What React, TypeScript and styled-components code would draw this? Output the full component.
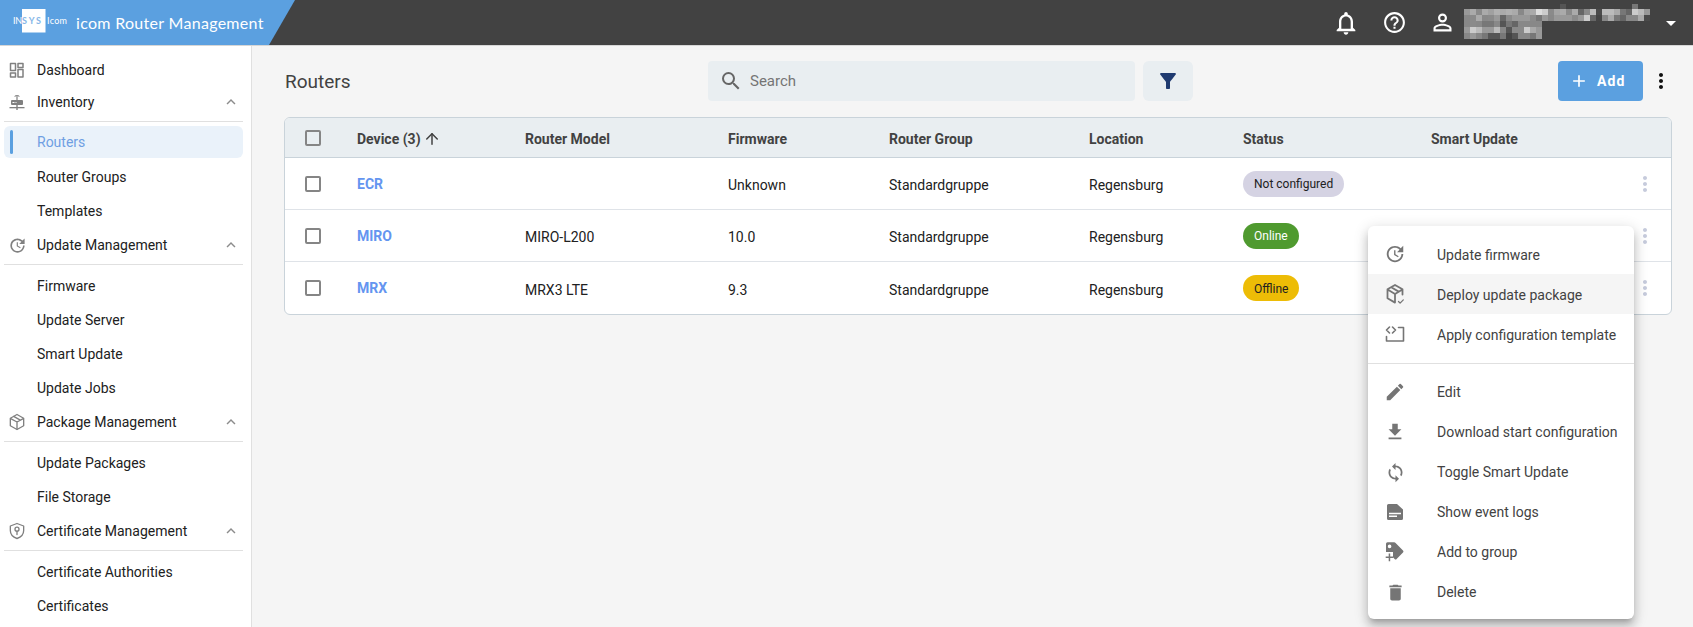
import React from "react";
import styled, { createGlobalStyle } from "styled-components";
import {
  MdAdd, MdArrowDropDown, MdDelete, MdEdit, MdExpandLess, MdFileDownload,
  MdFilterAlt, MdHelpOutline, MdMoreVert, MdNotificationsNone, MdPersonOutline, MdSearch, MdSync, MdUpdate,
} from "react-icons/md";
import { ArrowUp } from "lucide-react";

const Global = createGlobalStyle`
  html, body { margin: 0; padding: 0; height: 100%; overflow: hidden; background: #f5f5f5; }
  body { font-family: Roboto, "Liberation Sans", sans-serif; font-size: 14px; color: #212121; }
  * { box-sizing: border-box; }
`;

const Page = styled.div`display:flex;flex-direction:column;height:627px;position:relative;overflow:hidden;`;
const TopBar = styled.header`display:flex;align-items:stretch;height:46px;flex:none;background:#424242;border-bottom:1px solid #d6d6d6;color:#fff;`;
const Brand = styled.div`width:295px;display:flex;align-items:center;gap:8px;padding-left:10px;background:#5ba0e0;clip-path:polygon(0 0,100% 0,269px 100%,0 100%);`;
const BrandTitle = styled.span`font-family:Lato,"Open Sans",sans-serif;font-size:16px;letter-spacing:.3px;color:#fff;white-space:nowrap;`;
const TopActions = styled.div`margin-left:auto;display:flex;align-items:center;padding-right:10px;`;
const TopIcon = styled.span`width:48px;display:flex;justify-content:center;align-items:center;`;
const Mosaic = styled.svg`margin:4px 9px 0 -2px;align-self:flex-start;display:block;`;
const Caret = styled.span`display:flex;width:24px;`;

const Body = styled.div`display:flex;flex:1;min-height:0;`;
const Sidebar = styled.nav`width:252px;flex:none;background:#fff;border-right:1px solid #e0e0e0;padding:8px 8px 0 4px;overflow:hidden;`;
const NavHead = styled.div`height:32px;display:flex;align-items:center;padding-left:1px;color:#212121;`;
const NavIcon = styled.span`width:24px;height:24px;margin-right:8px;display:flex;align-items:center;justify-content:center;color:#808080;`;
const Chevron = styled.span`margin-left:auto;margin-right:3px;display:flex;color:#8c8c8c;`;
const NavRule = styled.div`height:1px;background:#e0e0e0;margin:3px 0 4px;`;
const SubItem = styled.div<{ $active?: boolean }>`
  height:${p => (p.$active ? "32px" : "34px")};
  margin-bottom:${p => (p.$active ? "2px" : "0")};
  display:flex;align-items:center;padding-left:33px;position:relative;border-radius:6px;
  color:${p => (p.$active ? "#6f9fe3" : "#212121")};
  background:${p => (p.$active ? "#eaf2fa" : "transparent")};
  ${p => p.$active ? `&::before{content:"";position:absolute;left:6px;top:4px;bottom:4px;width:3px;border-radius:2px;background:#5ba0e0;}` : ""}
`;
const SubList = styled.div`margin-bottom:1px;`;

const Main = styled.main`flex:1;min-width:0;padding:15px 21px 0 32px;`;
const Toolbar = styled.div`display:flex;align-items:center;height:40px;margin-bottom:16px;`;
const Title = styled.h1`width:424px;margin:0;font-size:19px;font-weight:400;color:#424242;padding-left:1px;`;
const SearchBox = styled.label`width:427px;height:40px;display:flex;align-items:center;gap:7px;padding-left:11px;background:#e9eef1;border-radius:4px;color:#666;`;
const SearchInput = styled.input`border:0;outline:0;padding:0;background:transparent;flex:1;font:15px Roboto,sans-serif;color:#424242;&::placeholder{color:#757575;opacity:1;}`;
const FilterButton = styled.button`width:50px;height:40px;margin-left:8px;border:0;border-radius:6px;background:#e9eef1;color:#1f3a70;display:flex;align-items:center;justify-content:center;padding:0;`;
const AddButton = styled.button`margin-left:auto;width:85px;height:40px;border:0;border-radius:4px;background:#5ba0e0;color:#fff;font:700 14px Roboto,sans-serif;letter-spacing:1.1px;display:flex;align-items:center;gap:8px;padding:0 0 0 11px;`;
const ToolKebab = styled.span`display:flex;margin-left:6px;margin-right:-1px;color:#111;`;

const Table = styled.div`border:1px solid #c9d3da;border-radius:6px;overflow:hidden;background:#fff;`;
const cols = "72px 168px 203px 161px 200px 154px 188px 1fr";
const HeadRow = styled.div`display:grid;grid-template-columns:${cols};height:40px;align-items:center;background:#e9eef1;border-bottom:1px solid #c9d3da;font-weight:700;color:#424242;`;
const HeadCell = styled.span`padding-top:2px;`;
const Row = styled.div<{ $last?: boolean }>`display:grid;grid-template-columns:${cols};height:52px;align-items:center;border-bottom:${p => (p.$last ? "0" : "1px solid #dfe3e8")};color:#212121;`;
const CheckCell = styled.div`padding-left:20px;display:flex;`;
const Check = styled.span`width:16px;height:16px;border:2px solid #858585;border-radius:2px;display:block;`;
const DeviceHead = styled(HeadCell)`display:flex;align-items:center;gap:2px;`;
const DeviceLink = styled.a`color:#6495f0;font-weight:700;`;
const Cell = styled.span<{ $drop: number }>`padding-top:${p => p.$drop}px;`;
const StatusCell = styled.div`display:flex;`;
const Chip = styled.span<{ $bg: string; $fg: string }>`display:inline-flex;align-items:center;height:26px;padding:1px 11px 0;border-radius:13px;font-size:12px;background:${p => p.$bg};color:${p => p.$fg};`;
const ActionCell = styled.div`display:flex;justify-content:flex-end;padding-right:14px;color:#c6cbdc;`;

const Menu = styled.div`position:absolute;left:1368px;top:226px;width:266px;padding:8px 0 7px;background:#fff;border-radius:6px;box-shadow:0 5px 5px -3px rgba(0,0,0,.2),0 8px 10px 1px rgba(0,0,0,.14),0 3px 14px 2px rgba(0,0,0,.12);`;
const MenuRow = styled.div<{ $hover?: boolean }>`height:40px;display:flex;align-items:center;padding-left:15px;gap:30px;color:#424242;background:${p => (p.$hover ? "#f5f5f5" : "transparent")};white-space:nowrap;`;
const MenuLabel = styled.span<{ $nudge?: boolean }>`padding-top:${p => (p.$nudge ? "2px" : "0")};`;
const MenuIcon = styled.span`width:24px;height:24px;display:flex;align-items:center;justify-content:center;color:#757575;`;
const MenuRule = styled.div`height:1px;background:#e0e0e0;margin:9px 0 8px;`;

const Stroke = ({ children, size = 24, width = 1.5 }: { children: React.ReactNode; size?: number; width?: number }) => (
  <svg width={size} height={size} viewBox="0 0 24 24" fill="none" stroke="currentColor" strokeWidth={width} strokeLinecap="round" strokeLinejoin="round">{children}</svg>
);
const DashIcon = () => <Stroke><rect x="5.5" y="5.5" width="5" height="7" /><rect x="13" y="5.5" width="5" height="4" /><rect x="5.5" y="15" width="5" height="4" /><rect x="13" y="11.5" width="5" height="7.5" /></Stroke>;
const RouterIcon = () => (
  <svg width="24" height="24" viewBox="0 0 24 24" fill="#808080">
    <rect x="6" y="10" width="12" height="5" rx="1" />
    <rect x="4.5" y="17" width="15" height="1.3" />
    <rect x="11.3" y="15" width="1.4" height="5" />
    <rect x="11.4" y="5.5" width="1.2" height="5" />
    <path d="M9.3 6.3a3.6 3.6 0 0 1 5.4 0l-.7.6a2.7 2.7 0 0 0-4 0z" />
    <rect x="7.5" y="12" width="2" height="1" fill="#fff" /><rect x="10.5" y="12" width="1" height="1" fill="#fff" />
  </svg>
);
const CubeIcon = () => <Stroke size={20} width={1.6}><path d="M12 3l8 4.5v9L12 21l-8-4.5v-9z" /><path d="M4.5 8L12 12l7.5-4M12 12v8.5M8 5.3l8 4.5" /></Stroke>;
const CubeCheckIcon = () => <Stroke width={1.8}><path d="M19.5 12.5V7.3L12 3 4.5 7.3v9L12 20.6M5 7.8L12 12l7-4.2M12 12v8M8.2 5.2l7.5 4.4" /><path d="M15.5 19.5l1.6 1.6 3.2-3.2" strokeWidth={1.3} /></Stroke>;
const ShieldIcon = () => <Stroke size={20} width={1.6}><path d="M12 3l8 3v5.5c0 4.6-3.3 8-8 9.5-4.7-1.5-8-4.9-8-9.5V6z" /><circle cx="12" cy="9.8" r="2.4" /><path d="M12 12.2v4" /></Stroke>;
const TemplateIcon = () => <Stroke width={1.6}><path d="M15.5 5.5h5V19h-17v-4.5" /><path d="M6.5 5L3.5 8l3 3M9.5 5l3 3-3 3" /></Stroke>;
const LogIcon = () => (
  <svg width="24" height="24" viewBox="0 0 24 24" fill="#757575">
    <path fillRule="evenodd" d="M4 5.5A1.5 1.5 0 0 1 5.5 4H14l6 5.5v9a1.5 1.5 0 0 1-1.5 1.5h-13A1.5 1.5 0 0 1 4 18.5zM6 12.8v1.4h12v-1.4zM6 15.6v1.4h8v-1.4z" />
  </svg>
);
const TagPlusIcon = () => (
  <svg width="24" height="24" viewBox="0 0 24 24" fill="#757575">
    <path fillRule="evenodd" d="M3 3.8a1.5 1.5 0 0 1 1.5-1.5h6.6a2 2 0 0 1 1.5.6l7.4 7.6a1.4 1.4 0 0 1 0 2l-6.4 6.4a1.4 1.4 0 0 1-2 0L10 17.2V12H3zM6.6 4.6a1.8 1.8 0 1 0 0 3.6 1.8 1.8 0 0 0 0-3.6z" />
    <path d="M5.7 13.5h1.5v3h3V18h-3v3.2H5.7V18h-3v-1.5h3z" />
  </svg>
);

const shades: string[][] = [
  ["", "", "", "", "", "", "", "", "", "", "", "", "", "", "", "", "555", "", "", "", "", "", "", "", "", "", "", "", "777"],
  ["999","aaa","8a8a8a","aaa","a0a0a0","b0b0b0","aaa","b0b0b0","aaa","888","a5a5a5","aaa","ddd","ccc","8a8a8a","a5a5a5","aaa","8a8a8a","aaa","666","8a8a8a","bbb","4a4a4a","bbb","bbb","aaa","777","666","ccc","bbb","999"],
  ["888","8a8a8a","aaa","888","8a8a8a","999","666","8a8a8a","999","999","999","8a8a8a","777","999","888","999","999","999","8a8a8a","999","ccc","666","444","888","aaa","777","666","888","888","aaa","4a4a4a"],
  ["888","8a8a8a","888","777","777","888","555","777","666","888","888","888","888"],
  ["999","ccc","bbb","999","999","bbb","888","555","8a8a8a","8a8a8a","ccc","aaa","999"],
  ["888","999","888","777","555","555","777","444","555","888","888","777","999"],
];
const BlurredUser = () => (
  <Mosaic width="186" height="36" viewBox="0 0 186 36">
    {shades.flatMap((row, y) => row.map((c, x) => c ? <rect key={`${x}-${y}`} x={x * 6} y={y === 0 ? 0 : y * 6 - 1} width="6" height={y === 0 ? 5 : 6} fill={`#${c}`} /> : null))}
  </Mosaic>
);

const Logo = () => (
  <svg width="58" height="45" viewBox="0 0 58 45" style={{ flex: "none" }}>
    <rect x="12" y="9" width="23.5" height="23.5" fill="#fff" />
    <text x="3" y="23.5" fontFamily="Lato, sans-serif" fontSize="9" fill="#fff" textLength="9">IN</text>
    <text x="12" y="23.5" fontFamily="Lato, sans-serif" fontSize="9" fontWeight="700" fill="#86b7e8" textLength="19">SYS</text>
    <text x="37" y="23.5" fontFamily="Lato, sans-serif" fontSize="9" fill="#fff" textLength="20">Icom</text>
  </svg>
);

type Group = { label: string; icon: React.ReactNode; items: { label: string; active?: boolean }[] };
const groups: Group[] = [
  { label: "Inventory", icon: <RouterIcon />, items: [{ label: "Routers", active: true }, { label: "Router Groups" }, { label: "Templates" }] },
  { label: "Update Management", icon: <MdUpdate size={19} />, items: [{ label: "Firmware" }, { label: "Update Server" }, { label: "Smart Update" }, { label: "Update Jobs" }] },
  { label: "Package Management", icon: <CubeIcon />, items: [{ label: "Update Packages" }, { label: "File Storage" }] },
  { label: "Certificate Management", icon: <ShieldIcon />, items: [{ label: "Certificate Authorities" }, { label: "Certificates" }] },
];

const rows = [
  { name: "ECR", model: "", fw: "Unknown", status: "Not configured", bg: "#d5d3e3", fg: "#212121", drop: 2 },
  { name: "MIRO", model: "MIRO-L200", fw: "10.0", status: "Online", bg: "#4f9a2f", fg: "#fff", drop: 2 },
  { name: "MRX", model: "MRX3 LTE", fw: "9.3", status: "Offline", bg: "#edbc06", fg: "#212121", drop: 4 },
];

const menuTop = [
  { label: "Update firmware", icon: <MdUpdate size={22} /> },
  { label: "Deploy update package", icon: <CubeCheckIcon />, hover: true },
  { label: "Apply configuration template", icon: <TemplateIcon /> },
];
const menuBottom = [
  { label: "Edit", icon: <MdEdit size={22} /> },
  { label: "Download start configuration", icon: <MdFileDownload size={22} /> },
  { label: "Toggle Smart Update", icon: <MdSync size={21} /> },
  { label: "Show event logs", icon: <LogIcon /> },
  { label: "Add to group", icon: <TagPlusIcon /> },
  { label: "Delete", icon: <MdDelete size={21} /> },
];

export default function App() {
  return (
    <Page>
      <Global />
      <TopBar>
        <Brand><Logo /><BrandTitle>icom Router Management</BrandTitle></Brand>
        <TopActions>
          <TopIcon><MdNotificationsNone size={28} /></TopIcon>
          <TopIcon><MdHelpOutline size={25} /></TopIcon>
          <TopIcon><MdPersonOutline size={27} /></TopIcon>
          <BlurredUser />
          <Caret><MdArrowDropDown size={24} /></Caret>
        </TopActions>
      </TopBar>
      <Body>
        <Sidebar>
          <NavHead><NavIcon><DashIcon /></NavIcon>Dashboard</NavHead>
          {groups.map(g => (
            <div key={g.label}>
              <NavHead><NavIcon>{g.icon}</NavIcon>{g.label}<Chevron><MdExpandLess size={18} /></Chevron></NavHead>
              <NavRule />
              <SubList>{g.items.map(i => <SubItem key={i.label} $active={i.active}>{i.label}</SubItem>)}</SubList>
            </div>
          ))}
        </Sidebar>
        <Main>
          <Toolbar>
            <Title>Routers</Title>
            <SearchBox><MdSearch size={24} /><SearchInput placeholder="Search" /></SearchBox>
            <FilterButton><MdFilterAlt size={24} /></FilterButton>
            <AddButton><MdAdd size={20} />Add</AddButton>
            <ToolKebab><MdMoreVert size={24} /></ToolKebab>
          </Toolbar>
          <Table>
            <HeadRow>
              <CheckCell><Check /></CheckCell>
              <DeviceHead>Device (3) <ArrowUp size={18} strokeWidth={2} /></DeviceHead>
              <HeadCell>Router Model</HeadCell><HeadCell>Firmware</HeadCell><HeadCell>Router Group</HeadCell><HeadCell>Location</HeadCell><HeadCell>Status</HeadCell><HeadCell>Smart Update</HeadCell>
            </HeadRow>
            {rows.map((r, i) => (
              <Row key={r.name} $last={i === rows.length - 1}>
                <CheckCell><Check /></CheckCell>
                <DeviceLink>{r.name}</DeviceLink>
                <Cell $drop={r.drop}>{r.model}</Cell><Cell $drop={r.drop}>{r.fw}</Cell><Cell $drop={r.drop}>Standardgruppe</Cell><Cell $drop={r.drop}>Regensburg</Cell>
                <StatusCell><Chip $bg={r.bg} $fg={r.fg}>{r.status}</Chip></StatusCell>
                <ActionCell><MdMoreVert size={24} /></ActionCell>
              </Row>
            ))}
          </Table>
        </Main>
      </Body>
      <Menu>
        {menuTop.map(m => <MenuRow key={m.label} $hover={m.hover}><MenuIcon>{m.icon}</MenuIcon><MenuLabel $nudge>{m.label}</MenuLabel></MenuRow>)}
        <MenuRule />
        {menuBottom.map(m => <MenuRow key={m.label}><MenuIcon>{m.icon}</MenuIcon><MenuLabel>{m.label}</MenuLabel></MenuRow>)}
      </Menu>
    </Page>
  );
}
